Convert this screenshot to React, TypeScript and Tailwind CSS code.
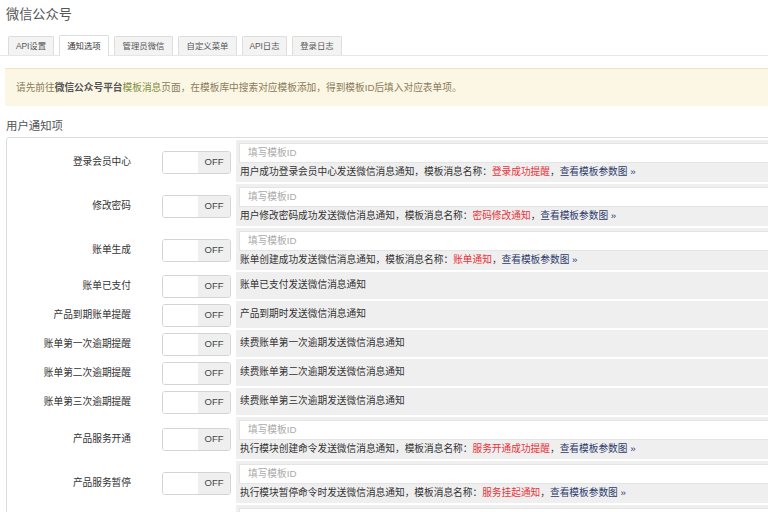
import React from 'react';

type Row = {
  label: string;
  input: boolean;
  text: string;
  name?: string;
};

const rows: Row[] = [
  { label: '登录会员中心', input: true, text: '用户成功登录会员中心发送微信消息通知，模板消息名称：', name: '登录成功提醒' },
  { label: '修改密码', input: true, text: '用户修改密码成功发送微信消息通知，模板消息名称：', name: '密码修改通知' },
  { label: '账单生成', input: true, text: '账单创建成功发送微信消息通知，模板消息名称：', name: '账单通知' },
  { label: '账单已支付', input: false, text: '账单已支付发送微信消息通知' },
  { label: '产品到期账单提醒', input: false, text: '产品到期时发送微信消息通知' },
  { label: '账单第一次逾期提醒', input: false, text: '续费账单第一次逾期发送微信消息通知' },
  { label: '账单第二次逾期提醒', input: false, text: '续费账单第二次逾期发送微信消息通知' },
  { label: '账单第三次逾期提醒', input: false, text: '续费账单第三次逾期发送微信消息通知' },
  { label: '产品服务开通', input: true, text: '执行模块创建命令发送微信消息通知，模板消息名称：', name: '服务开通成功提醒' },
  { label: '产品服务暂停', input: true, text: '执行模块暂停命令时发送微信消息通知，模板消息名称：', name: '服务挂起通知' },
];

const tabs = [
  { name: 'API设置', w: 'w-[46px]' },
  { name: '通知选项', w: 'w-[50px]', active: true },
  { name: '管理员微信', w: 'w-[59px]' },
  { name: '自定义菜单', w: 'w-[59px]' },
  { name: 'API日志', w: 'w-[45px]' },
  { name: '登录日志', w: 'w-[50px]' },
];

const Toggle: React.FC = () => (
  <div className="flex h-[23px] w-[69px] overflow-hidden rounded-[3px] border border-[#d4d4d4]">
    <div className="w-[35px] bg-white" />
    <div className="flex flex-1 items-center justify-center bg-[#efefef] text-[9.5px] text-[#444]">OFF</div>
  </div>
);

const App: React.FC = () => {
  return (
    <div className="h-[512px] w-[768px] overflow-hidden bg-white font-['Liberation_Sans','Noto_Sans_CJK_SC',sans-serif] text-[#333]">
      <div className="pl-[6px] pt-[6px] text-[13.2px] leading-[18px] text-[#555]">微信公众号</div>

      <div className="mt-[11px] flex items-end gap-[5px] border-b border-[#e6e6e6] pl-[8px]">
        {tabs.map((t) => (
          <div
            key={t.name}
            className={
              t.active
                ? `${t.w} -mb-px h-[21px] rounded-t-[2px] border border-b-0 border-[#ddd] bg-white text-center text-[8.4px] leading-[20px] text-[#333]`
                : `${t.w} h-[19px] rounded-t-[2px] border border-b-0 border-[#ddd] bg-[#f3f3f3] text-center text-[8.4px] leading-[18px] text-[#555]`
            }
          >
            {t.name}
          </div>
        ))}
      </div>

      <div className="ml-[5px] mt-[12px] h-[38px] border-t border-[#f1e4c2] bg-[#fcf6e4] pl-[11px] text-[9.7px] leading-[37px] text-[#8a7c5c]">
        请先前往<span className="font-bold text-[#555]">微信公众号平台</span>
        <span className="text-[#7f8f3c]">模板消息</span>页面，在模板库中搜索对应模板添加，得到模板ID后填入对应表单项。
      </div>

      <div className="mt-[12px] pl-[6px] text-[11.4px] leading-[16px] text-[#555]">用户通知项</div>

      <div className="ml-[6px] mt-[3px] w-[900px] rounded-[3px] border border-[#ddd] pt-[2px]">
        {rows.map((r) => (
          <div key={r.label} className="flex">
            <div className="flex w-[124px] items-center justify-end text-[9.7px]">{r.label}</div>
            <div className="flex w-[105px] items-center pl-[31px]">
              <Toggle />
            </div>
            <div className="mb-[2px] flex-1">
              {r.input ? (
                <div className="h-[42px] bg-[#efefef] px-[3px] pt-[3px]">
                  <div className="h-[20px] w-full border border-[#e4e4e4] bg-white pl-[8px] text-[9.7px] leading-[18px] text-[#aaa]">
                    填写模板ID
                  </div>
                  <div className="pl-px pt-[2px] text-[9.7px] leading-[14px] text-[#333]">
                    {r.text}
                    <span className="text-[#e8333a]">{r.name}</span>，
                    <span className="text-[#2d3a6b]">查看模板参数图 »</span>
                  </div>
                </div>
              ) : (
                <div className="flex h-[27px] items-center bg-[#efefef] pl-[4px] text-[9.7px] text-[#333]">{r.text}</div>
              )}
            </div>
          </div>
        ))}
        {/* next row, only its top edge shows in the window */}
        <div className="flex">
          <div className="w-[229px]" />
          <div className="h-[42px] flex-1 bg-[#efefef] px-[3px] pt-[3px]">
            <div className="h-[20px] w-full border border-[#e4e4e4] bg-white" />
          </div>
        </div>
      </div>
    </div>
  );
};

export default App;
